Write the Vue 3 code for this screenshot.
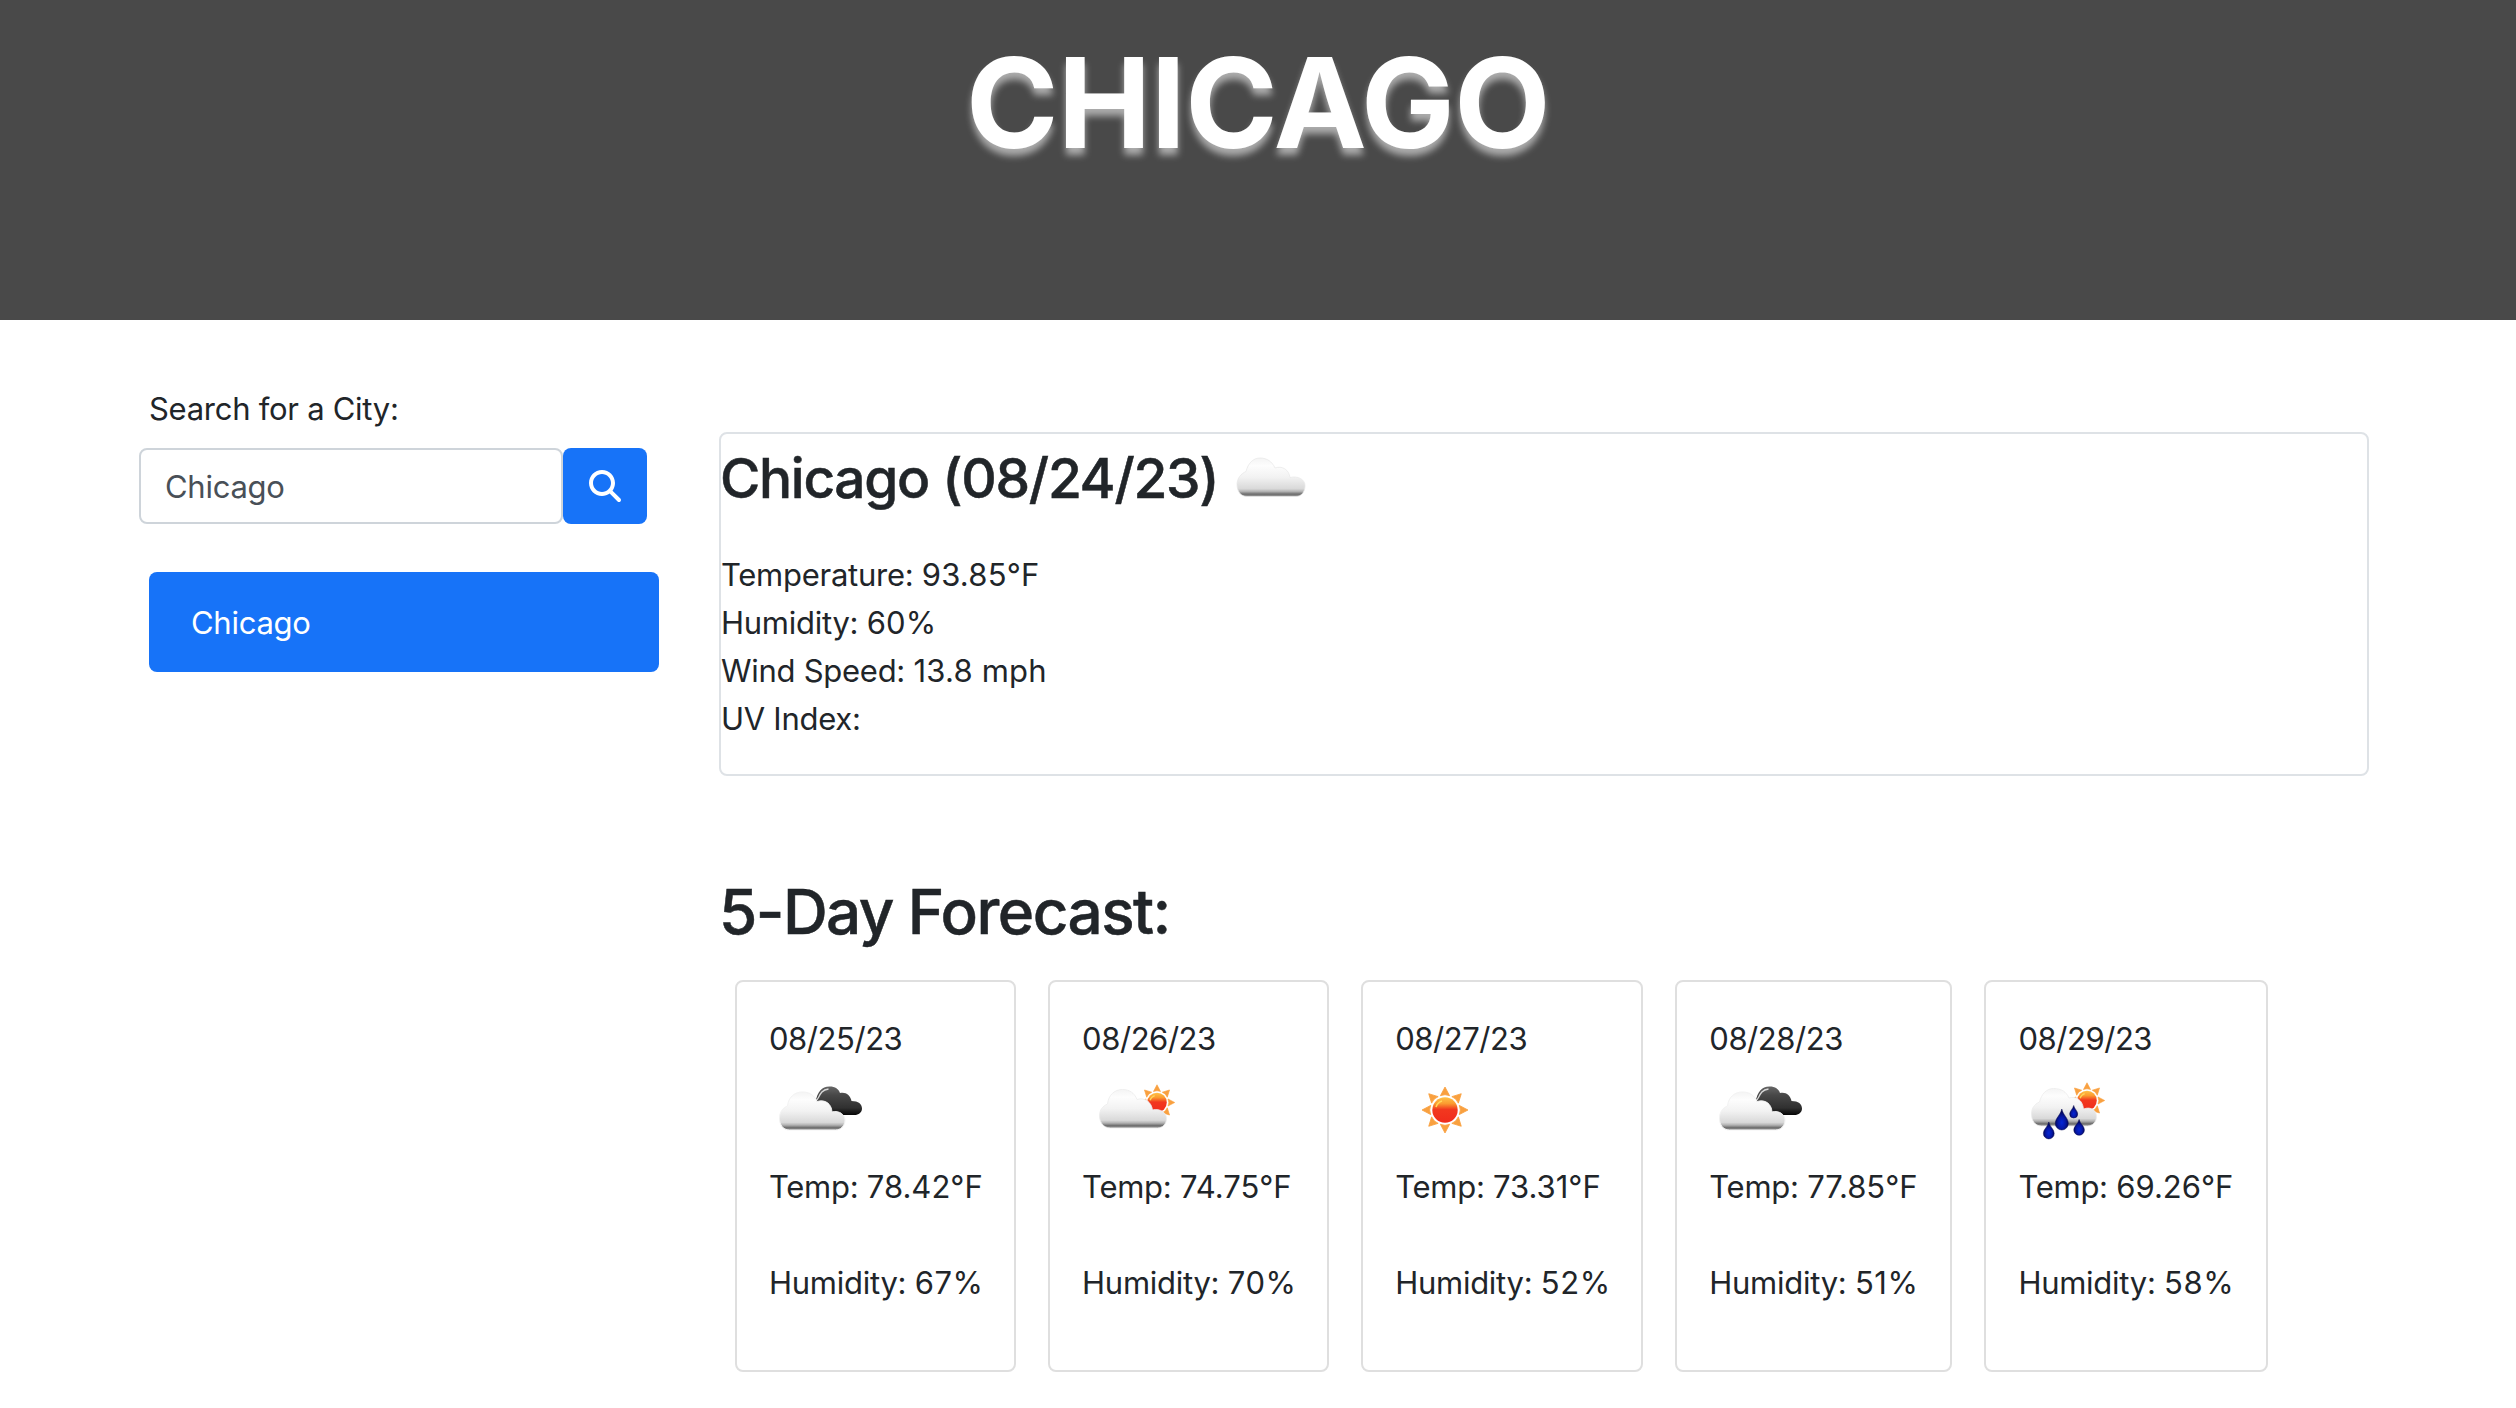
<script setup>
import { ref } from 'vue'

const city = ref('Chicago')
const rays = [0, 45, 90, 135, 180, 225, 270, 315]

const forecast = [
  { date: '08/25/23', icon: 'broken', temp: '78.42', humidity: 67 },
  { date: '08/26/23', icon: 'partly', temp: '74.75', humidity: 70 },
  { date: '08/27/23', icon: 'sun', temp: '73.31', humidity: 52 },
  { date: '08/28/23', icon: 'broken', temp: '77.85', humidity: 51 },
  { date: '08/29/23', icon: 'rain', temp: '69.26', humidity: 58 }
]

// Placement of the sun inside each icon that has one
const suns = {
  sun: 'translate(49.500 50)',
  partly: 'translate(74.500 42.5) scale(.77)',
  rain: 'translate(68.500 40.5) scale(.77)'
}
</script>

<template>
  <div class="page">
    <svg class="defs" width="0" height="0" aria-hidden="true">
      <defs>
        <linearGradient id="cloudFill" x1="0" y1="0" x2="0" y2="1">
          <stop offset="0" stop-color="#f4f4f4" />
          <stop offset=".2" stop-color="#fdfdfd" />
          <stop offset=".5" stop-color="#f2f2f2" />
          <stop offset=".8" stop-color="#d9d9d9" />
          <stop offset=".87" stop-color="#b2b2b2" />
          <stop offset=".94" stop-color="#6c6c6c" />
          <stop offset="1" stop-color="#a0a0a0" />
        </linearGradient>
        <linearGradient id="darkFill" x1="0" y1="0" x2="0" y2="1">
          <stop offset="0" stop-color="#666" />
          <stop offset=".3" stop-color="#484848" />
          <stop offset=".75" stop-color="#303030" />
          <stop offset="1" stop-color="#050505" />
        </linearGradient>
        <linearGradient id="sunFill" x1="0" y1="0" x2="0" y2="1">
          <stop offset="0" stop-color="#ffc247" />
          <stop offset=".25" stop-color="#fb9a30" />
          <stop offset=".48" stop-color="#f2381f" />
          <stop offset="1" stop-color="#f02c1c" />
        </linearGradient>
        <radialGradient id="dropFill" cx=".5" cy=".65" r=".55">
          <stop offset="0" stop-color="#0526d6" />
          <stop offset=".5" stop-color="#0618a8" />
          <stop offset="1" stop-color="#040650" />
        </radialGradient>
      </defs>
    </svg>

    <header class="hero">
      <h1 class="hero-title">CHICAGO</h1>
    </header>

    <main class="content">
      <aside class="sidebar">
        <label class="search-label" for="city">Search for a City:</label>
        <form class="search-row" @submit.prevent>
          <input id="city" v-model="city" class="search-input" type="text" />
          <button class="search-button" type="submit" aria-label="Search">
            <svg width="32" height="32" viewBox="0 0 512 512" fill="#fff">
              <path d="M416 208c0 45.9-14.9 88.3-40 122.7L502.6 457.4c12.5 12.5 12.5 32.8 0 45.3s-32.8 12.5-45.3 0L330.7 376c-34.4 25.2-76.8 40-122.7 40C93.1 416 0 322.9 0 208S93.1 0 208 0S416 93.1 416 208zM208 352c79.5 0 144-64.5 144-144s-64.5-144-144-144S64 128.5 64 208s64.5 144 144 144z" />
            </svg>
          </button>
        </form>
        <div class="history-item">Chicago</div>
      </aside>

      <section class="results">
        <article class="current">
          <div class="current-head">
            <h3 class="current-title">Chicago (08/24/23)</h3>
            <svg class="weather-icon" viewBox="0 -0.500 100 100">
              <path d="M26 62 C20 62 16 57 16 50 C16 44 20 39 25 37 C27 29 32 23.500 39 23.500 C46 23.500 51 27 54 33.500 C61 31 68 35 69 43 C77 41 84 45 84 51 C84 58 80 62 75 62 Z" fill="url(#cloudFill)" stroke="#e6e6e6" stroke-width=".7" />
            </svg>
          </div>
          <p class="line">Temperature: <span class="value">93.85°F</span></p>
          <p class="line">Humidity: <span class="value">60%</span></p>
          <p class="line">Wind Speed: <span class="value">13.8 mph</span></p>
          <p class="line">UV Index:</p>
        </article>

        <h2 class="forecast-title">5-Day Forecast:</h2>
        <div class="forecast">
          <article v-for="day in forecast" :key="day.date" class="day">
            <p class="line date">{{ day.date }}</p>
            <svg class="weather-icon" viewBox="-0.500 3 100 100">
              <g v-if="suns[day.icon]" :transform="suns[day.icon]">
                <path v-for="a in rays" :key="a" :transform="`rotate(${a})`" d="M-4.600 -14.300 Q0 -16.300 4.600 -14.300 L0 -23 Z" fill="#f9a03f" stroke="#f9a03f" stroke-width=".8" />
                <circle r="12.7" fill="url(#sunFill)" />
                <path d="M-9 -3 A9.500 9.500 0 0 1 -3 -9" fill="none" stroke="#ffd75a" stroke-width="1.6" />
              </g>
              <g v-if="day.icon === 'broken'">
                <path d="M46 42 C48 32 52 26.500 60 26.500 C66 26.500 69 29 70.500 33 C76 31.500 81 35 82 41 C89 41 92.500 44 92.500 48.500 C92.500 52.500 89 55 85 55 L62 55 Z" fill="url(#darkFill)" />
                <path d="M46 41 C50 40 49 30 59 29" fill="none" stroke="#d8d8d8" stroke-width="1.3" />
                <path d="M20 70 C13 70 10 64 10 58.500 C10 52 13 48 18 46 C19 37 25 32 33 32 C41 32 45 36 47.500 41.500 C56 39 62 44 62.500 52 C70 50 75.500 55 75.500 60 C75.500 66 71 70 66 70 Z" fill="url(#cloudFill)" stroke="#f3f3f3" stroke-width="1" />
              </g>
              <path v-if="day.icon === 'partly'" d="M28 68 C20 68 17 61 17 56 C17 50 20 46 25 44 C26 35 32 29.500 40 29.500 C47 29.500 52 33 54.500 39.500 C62 37 69 42 70 50 C78 48 84 53 84 58.500 C84 64 80 68 75 68 Z" fill="url(#cloudFill)" stroke="#ececec" stroke-width=".8" />
              <g v-if="day.icon === 'rain'">
                <path d="M23 66 C16 66 13 60 13 54 C13 48 16 44 21 42 C23 34 28 28.500 35 28.500 C43 28.500 48 32 50.500 38 C58 36 64 40 65 49 C73 46 78 51 78 56.500 C78 62 74 66 69 66 Z" fill="url(#cloudFill)" stroke="#ececec" stroke-width=".8" />
                <g fill="url(#dropFill)" stroke="#040650" stroke-width=".5">
                  <path d="M43.300 49 C44.500 55 49.800 58 49.800 63.500 A6.500 6.500 0 0 1 36.800 63.500 C36.800 58 42.100 55 43.300 49 Z" />
                  <path d="M55.200 45.500 C56 49 59.200 51 59.200 54 A4 4 0 0 1 51.200 54 C51.200 51 54.400 49 55.200 45.500 Z" />
                  <path d="M30.300 62 C31.300 67 35.700 69 35.700 73.500 A5.400 5.400 0 0 1 24.900 73.500 C24.900 69 29.300 67 30.300 62 Z" />
                  <path d="M60.600 59.500 C61.600 64 65.900 66 65.900 70 A5.300 5.300 0 0 1 55.300 70 C55.300 66 59.600 64 60.600 59.500 Z" />
                </g>
              </g>
            </svg>
            <p class="line">Temp: <span class="value">{{ day.temp }}°F</span></p>
            <p class="line humidity">Humidity: <span class="value">{{ day.humidity }}%</span></p>
          </article>
        </div>
      </section>
    </main>
  </div>
</template>

<style>
body {
  background: #fff;
}
</style>

<style scoped>
.page {
  width: 2516px;
  height: 1408px;
  overflow: hidden;
  position: relative;
  background: #fff;
  color: #212529;
  font-family: Inter, "Liberation Sans", sans-serif;
  font-size: 31px;
  font-weight: 400;
  letter-spacing: -0.27px;
  line-height: 48px;
}

.page * {
  box-sizing: border-box;
}

.defs {
  position: absolute;
}

h1,
h2,
h3,
p {
  margin: 0;
}

.hero {
  height: 320px;
  padding-top: 28px;
  background: #494949;
  text-align: center;
}

.hero-title {
  color: #fff;
  font-size: 125px;
  font-weight: 700;
  line-height: 150px;
  letter-spacing: -0.6px;
  text-shadow: 0 7px 7px rgba(255, 255, 255, 0.55);
}

.content {
  display: flex;
}

.sidebar {
  width: 719px;
  padding: 65px 60px 0 139px;
}

.search-label {
  display: block;
  margin: 0 0 15px 10px;
}

.search-row {
  display: flex;
  width: 508px;
}

.search-input {
  width: 424px;
  height: 76px;
  padding: 0 24px;
  border: 2px solid #ced4da;
  border-radius: 8px;
  background: #fff;
  color: #495057;
  font: inherit;
  letter-spacing: inherit;
  outline: none;
}

.search-button {
  display: flex;
  align-items: center;
  justify-content: center;
  width: 84px;
  height: 76px;
  padding: 0;
  border: 0;
  border-radius: 8px;
  background: #1773f8;
}

.history-item {
  width: 510px;
  height: 100px;
  margin: 48px 0 0 10px;
  padding: 27px 42px 25px;
  border-radius: 8px;
  background: #1773f8;
  color: #fff;
}

.results {
  width: 1650px;
  padding-top: 112px;
}

.current {
  height: 344px;
  border: 2px solid #dee2e6;
  border-radius: 8px;
}

.current-head {
  display: flex;
  align-items: flex-start;
  height: 117px;
}

.current-title {
  width: 501px;
  margin-left: -1px;
  padding-top: 11px;
  font-size: 55px;
  font-weight: 500;
  line-height: 66px;
  letter-spacing: -1.3px;
  white-space: nowrap;
  -webkit-text-stroke: 0.5px currentColor;
}

.value {
  letter-spacing: 0.2px;
}

.date {
  letter-spacing: -0.45px;
}

.weather-icon {
  display: block;
  width: 100px;
  height: 100px;
}

.forecast-title {
  margin-top: 98px;
  font-size: 62px;
  font-weight: 500;
  line-height: 76px;
  letter-spacing: -1.55px;
  -webkit-text-stroke: 0.5px currentColor;
}

.forecast {
  display: grid;
  grid-template-columns: 280.5px 280.5px 281.5px 276.5px 283.5px;
  gap: 32.6px;
  margin: 30px 0 0 16px;
}

.day {
  height: 392px;
  padding: 33px 0 0 32px;
  border: 2px solid #dfdfdf;
  border-radius: 8px;
  white-space: nowrap;
}

.day .value {
  letter-spacing: 0;
}

.day .humidity .value {
  letter-spacing: 0.6px;
}

.humidity {
  margin-top: 48px;
}
</style>
